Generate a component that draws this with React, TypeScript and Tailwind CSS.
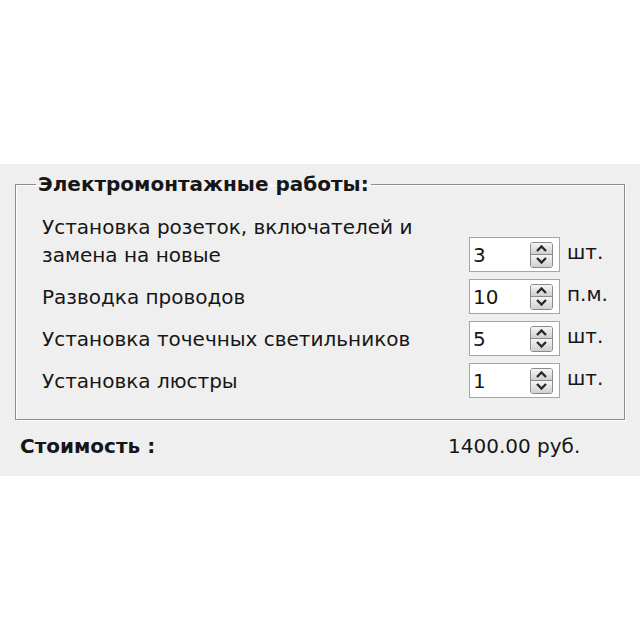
import React from 'react';

const rows = [
  { label: ['Установка розеток, включателей и', 'замена на новые'], value: '3', unit: 'шт.' },
  { label: ['Разводка проводов'], value: '10', unit: 'п.м.' },
  { label: ['Установка точечных светильников'], value: '5', unit: 'шт.' },
  { label: ['Установка люстры'], value: '1', unit: 'шт.' },
];

const Spin: React.FC = () => (
  <div className="w-[23px] h-[26px] flex flex-col rounded-[3px] border border-[#8a8a8a] overflow-hidden">
    <div className="flex-1 bg-gradient-to-b from-[#f6f6f6] to-[#cfcfcf] flex items-center justify-center border-b border-[#8a8a8a]">
      <svg width="11" height="7" viewBox="0 0 11 7"><path d="M1 6 L5.5 1.5 L10 6" fill="none" stroke="#2a2a2a" strokeWidth="2.4" /></svg>
    </div>
    <div className="flex-1 bg-gradient-to-b from-[#f6f6f6] to-[#cfcfcf] flex items-center justify-center">
      <svg width="11" height="7" viewBox="0 0 11 7"><path d="M1 1 L5.5 5.5 L10 1" fill="none" stroke="#2a2a2a" strokeWidth="2.4" /></svg>
    </div>
  </div>
);

export default function App() {
  return (
    <div className="w-[640px] h-[640px] bg-white pt-[164px]" style={{ fontFamily: '"DejaVu Sans", Verdana, sans-serif' }}>
      <div className="h-[312px] bg-[#efefef] pt-[10px] px-[15px] text-[#161616]">
        <fieldset className="w-[610px] h-[246px] border border-[#8c8c8c] shadow-[inset_1px_1px_0_#fff,1px_1px_0_#fff]">
          <legend className="ml-[20px] px-[2px] text-[20px] font-bold leading-[20px]">Электромонтажные работы:</legend>
          <div className="flex flex-col pt-[12px] pl-[26px]">
            {rows.map((r, i) => (
              <div key={i} className={`flex items-end ${i === 0 ? 'h-[66px]' : 'h-[42px]'}`}>
                <div className="flex-1 text-[20px] leading-[28px] pb-[3px]">
                  {r.label.map((l, j) => <div key={j}>{l}</div>)}
                </div>
                <div className="w-[91px] h-[35px] bg-white border border-[#a5a5a5] flex items-center justify-between pl-[3px] pr-[6px] text-[20px]">
                  <span>{r.value}</span>
                  <Spin />
                </div>
                <div className="w-[64px] pl-[7px] text-[20px] pb-[5px]">{r.unit}</div>
              </div>
            ))}
          </div>
        </fieldset>
        <div className="flex mt-[8px] leading-[36px]">
          <div className="w-[433px] pl-[5px] font-bold text-[20px]">Стоимость :</div>
          <div className="text-[20px]">1400.00 руб.</div>
        </div>
      </div>
    </div>
  );
}
